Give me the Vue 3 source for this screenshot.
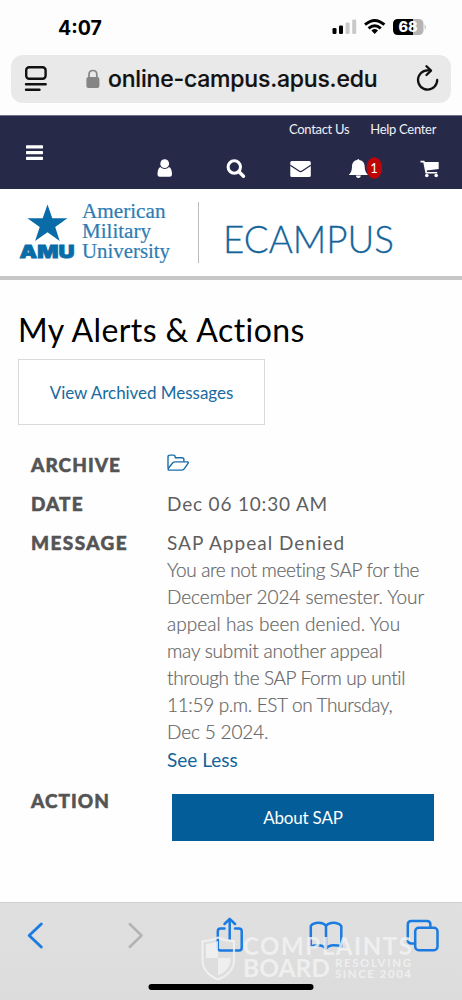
<script setup>
const bodyLines = [
  'You are not meeting SAP for the',
  'December 2024 semester. Your',
  'appeal has been denied. You',
  'may submit another appeal',
  'through the SAP Form up until',
  '11:59 p.m. EST on Thursday,',
  'Dec 5 2024.',
]
</script>

<template>
  <div class="phone">
    <div class="status">
      <span class="time">4:07</span>
      <svg class="status-icons" width="100" height="20" viewBox="0 0 100 20">
        <rect x="5.500" y="11" width="4" height="6" rx="1.300" />
        <rect x="12" y="8.500" width="4" height="8.500" rx="1.300" />
        <rect x="18.600" y="5.500" width="4" height="11.500" rx="1.300" fill="#c9c9c9" />
        <rect x="25.200" y="2.500" width="4" height="14.500" rx="1.300" fill="#c9c9c9" />
        <g fill="none" stroke="#000" stroke-width="2.900">
          <path d="M38 7.700Q47.700-.8 57.400 7.700" />
          <path d="M41.600 11.400Q47.700 5.900 53.800 11.400" />
        </g>
        <path d="M44.400 13.400Q47.700 10.500 51 13.400L47.700 17z" />
        <path d="M71 2H86V18H71Q66 18 66 13V7Q66 2 71 2Z" />
        <path d="M86 2H91.500Q96.500 2 96.500 7V13Q96.500 18 91.500 18H86Z" fill="#b5b5b5" />
        <path d="M97.700 7.300Q100 10 97.700 12.700Z" fill="#b5b5b5" />
        <text x="71.500" y="15.400" class="battery">68</text>
      </svg>
    </div>

    <div class="urlbar">
      <svg class="reader" width="24" height="28" viewBox="0 0 24 28" fill="none" stroke="#111" stroke-width="2.400" stroke-linecap="round">
        <rect x="2.200" y="2.200" width="19.400" height="11.600" rx="3" />
        <path d="M2 19.200H21.700M2 24.800H15.500" />
      </svg>
      <svg class="lock" width="14" height="20" viewBox="0 0 14 20">
        <rect x=".4" y="8" width="13" height="11" rx="2" fill="#858585" />
        <path d="M3 9V5.500Q3 1.500 6.900 1.500T10.800 5.500V9" fill="none" stroke="#858585" stroke-width="1.700" />
      </svg>
      <span class="url">online-campus.apus.edu</span>
      <svg class="reload" width="24" height="28" viewBox="0 0 24 28" fill="none" stroke="#111" stroke-width="2.300" stroke-linecap="round" stroke-linejoin="round">
        <path d="M14.300 5.400H11.500A9.600 9.600 0 1 0 21.200 15" />
        <path d="M10.500 1.200L15 5.600L10.500 10" />
      </svg>
    </div>

    <nav class="nav">
      <svg class="burger" width="18" height="16" viewBox="0 0 18 16" fill="#fff">
        <rect width="17" height="3.200" y=".3" rx=".6" /><rect width="17" height="3.200" y="6" rx=".6" /><rect width="17" height="3.200" y="11.700" rx=".6" />
      </svg>
      <div class="nav-right">
        <div class="nav-links"><span>Contact Us</span><span>Help Center</span></div>
        <svg class="nav-icons" width="290" height="24" viewBox="0 0 290 24" fill="#fff">
          <circle cx="11.700" cy="6.700" r="4.400" />
          <path d="M7.200 9.900Q11.700 14.100 16.200 9.900Q18.900 11.100 19 17.500Q19 19.800 16.700 19.800H6.700Q4.500 19.800 4.500 17.500Q4.600 11.100 7.200 9.900Z" />
          <circle cx="81.300" cy="10" r="6.200" fill="none" stroke="#fff" stroke-width="3" />
          <path d="M86 14.700L90.500 19.200" stroke="#fff" stroke-width="3.400" stroke-linecap="round" />
          <rect x="137.300" y="4" width="20.500" height="16" rx="1.600" />
          <path d="M137.300 8.200L146 14Q147.600 15.100 149.200 14L157.800 8.200" fill="none" stroke="#272948" stroke-width="1.300" />
          <path d="M204.200 3Q205.300.9 206.400 3C210 3.700 211.700 6.300 211.700 9.700C211.700 13.700 213.300 16 215 18H195.800C197.500 16 199 13.700 199 9.700C199 6.300 200.600 3.700 204.200 3Z" />
          <path d="M202.800 18.500H208Q207.500 21 205.400 21T202.800 18.500Z" />
          <ellipse cx="221.300" cy="11" rx="7.800" ry="10.800" fill="#bf0508" />
          <text x="221" y="15.500" class="badge">1</text>
          <path d="M267.500 3.700H271.300L272 5H285.700V12L273.700 13.600L274 14.900H284.200V16.500H272.500L270.300 5.400H267.500Z" />
          <circle cx="273.800" cy="18.500" r="1.800" /><circle cx="283.200" cy="18.500" r="1.800" />
        </svg>
      </div>
    </nav>

    <header class="brand">
      <svg width="462" height="86" viewBox="0 0 462 86">
        <path d="M47.500 14.500L52.300 28.300H67.400L55.200 36.900L59.700 51L47.500 42.300L35.100 51L39.700 36.900L27.400 28.300H42.700Z" fill="#096ca8" />
        <text x="19.500" y="68" class="amu" textLength="55" lengthAdjust="spacingAndGlyphs">AMU</text>
        <g class="univ">
          <text x="82" y="28" textLength="83.500" lengthAdjust="spacingAndGlyphs">American</text>
          <text x="82" y="48" textLength="69" lengthAdjust="spacingAndGlyphs">Military</text>
          <text x="82" y="68" textLength="88" lengthAdjust="spacingAndGlyphs">University</text>
        </g>
        <path d="M198.500 12V73" stroke="#bcbcbc" />
        <text x="223" y="62.500" class="ecampus" textLength="171" lengthAdjust="spacingAndGlyphs">ECAMPUS</text>
      </svg>
    </header>

    <main class="main">
      <h1>My Alerts &amp; Actions</h1>
      <div class="archived"><span>View Archived Messages</span></div>
      <dl class="rows">
        <dt>ARCHIVE</dt>
        <dd>
          <svg class="folder" width="23" height="18" viewBox="0 0 23 18" fill="none" stroke="#186da8" stroke-width="1.400" stroke-linejoin="round">
            <path d="M1 14V3Q1 1.100 3 1.100H6.300Q8.200 1.100 8.200 3V3.700H15Q16.900 3.700 16.900 5.500V7.800" />
            <path d="M1.200 14.500L5.600 9Q6.600 7.900 8 7.900H20.300Q22 7.900 21 9.300L17.400 14.700Q16.400 16.100 15 16.100H2.500Q.6 16.100 1.200 14.500Z" />
          </svg>
        </dd>
        <dt>DATE</dt>
        <dd class="date">Dec 06 10:30 AM</dd>
        <dt class="wide">MESSAGE</dt>
        <dd>
          <div class="subject">SAP Appeal Denied</div>
          <div class="text">
            <div v-for="(line, i) in bodyLines" :key="i" :class="'line' + i">{{ line }}</div>
          </div>
          <div class="less">See Less</div>
        </dd>
        <dt>ACTION</dt>
        <dd><div class="button"><span>About SAP</span></div></dd>
      </dl>
    </main>

    <footer class="toolbar">
      <svg width="462" height="98" viewBox="0 0 462 98" fill="none" stroke-linecap="round" stroke-linejoin="round">
        <path d="M41.300 22L29.200 33.500L41.300 45" stroke="#1b7be0" stroke-width="2.900" />
        <path d="M129.700 22L141.500 33.500L129.700 45" stroke="#b3b3b3" stroke-width="2.500" />
        <g stroke="#1b7be0" stroke-width="2.500">
          <path d="M224.500 26.500H220.500Q217.800 26.500 217.800 29.300V45.700Q217.800 48.500 220.500 48.500H239Q241.700 48.500 241.700 45.700V29.300Q241.700 26.500 239 26.500H235M229.700 37V17.500M224.500 22L229.700 16.800L235 22" />
          <path d="M326 24Q324 20.800 318.500 20.800T310.800 24V44.500Q314 43.200 318.500 43.200T326 46.700Q328.500 43.200 333.500 43.200T341.300 44.500V24Q338.500 20.800 333.500 20.800T326 24V46.700" />
          <rect x="415.200" y="25.800" width="22.300" height="22.400" rx="3.500" />
          <path d="M415 41.500H411.500Q407.800 41.500 407.800 38V22.500Q407.800 18.900 411.500 18.900H427Q430.400 18.900 430.400 22.500V25.500" />
        </g>
        <g class="mark">
          <path d="M218 35.500Q226 39.200 234 39.200V58Q234 71 218 77.500Q202.500 71 202.500 58V39.200Q210 39.200 218 35.500Z" stroke="#f4f4f4" stroke-width="2.200" />
          <path d="M218 39V56H206V42Q212 42 218 39ZM218 56H230.500V59Q230 68 218 73.500Z" fill="#f4f4f4" />
          <text x="243" y="52.800" class="wm big" textLength="169">COMPLAINTS</text>
          <text x="243" y="75.300" class="wm big" textLength="87" lengthAdjust="spacingAndGlyphs">BOARD</text>
          <text x="335" y="65" class="wm small" textLength="76">RESOLVING</text>
          <text x="335" y="75.500" class="wm small" textLength="76">SINCE 2004</text>
        </g>
        <rect x="148.500" y="82" width="165" height="6" rx="3" fill="#000" />
      </svg>
    </footer>
  </div>
</template>

<style>
body { margin: 0; background: #fff; }
</style>

<style scoped>
.phone { width: 462px; height: 1000px; overflow: hidden; display: flex; flex-direction: column; background: #fdfdfe; font-family: Lato, "Open Sans", sans-serif; font-variant-ligatures: none; white-space: nowrap; }
.status { height: 55px; flex: none; box-sizing: border-box; padding: 17px 35px 0 58px; display: flex; justify-content: space-between; }
.time { font: 700 19.500px/22px Inter, sans-serif; color: #000; }
.battery { font: 800 14.500px Inter, sans-serif; fill: #fff; }
.urlbar { height: 48px; flex: none; box-sizing: border-box; margin: 0 11px; border-radius: 12px; background: #e9e9ea; display: flex; align-items: center; padding: 0 11px 0 13px; }
.lock { margin-left: 38px; }
.url { margin-left: 8px; font: 500 23px/30px Inter, sans-serif; letter-spacing: -.2px; -webkit-text-stroke: .2px #111; color: #111; width: 270px; }
.reload { margin-left: auto; }
.nav { height: 74px; flex: none; margin-top: 12px; background: #272948; border-top: 1px solid #70728a; box-sizing: border-box; display: flex; justify-content: space-between; }
.burger { margin: 29px 0 0 26px; }
.nav-right { width: 309px; }
.nav-links { height: 26px; padding-left: 136px; display: flex; gap: 21px; color: #f0f0f5; font-size: 13px; line-height: 26px; letter-spacing: -.3px; }
.nav-icons { display: block; margin-top: 15px; overflow: visible; }
.badge { font: 400 13px Lato, sans-serif; text-anchor: middle; fill: #fff; }
.brand { height: 91px; flex: none; box-sizing: border-box; padding-top: 1px; background: #fff; border-bottom: 4px solid #c7c7c8; }
.brand svg { display: block; }
.amu { font: 900 18px Inter, sans-serif; fill: #096ca8; stroke: #096ca8; stroke-width: .8px; }
.univ { font: 400 20px "Liberation Serif", serif; fill: #2f7cb2; stroke: #2f7cb2; stroke-width: .2px; }
.ecampus { font: 300 38px Lato, sans-serif; fill: #14659b; stroke: #14659b; stroke-width: .3px; }
.main { flex: 1; padding: 32px 0 0 18px; background: #fefefe; }
h1 { margin: 0; font-size: 32px; line-height: 35px; font-weight: 400; color: #000; letter-spacing: .42px; }
.archived { margin-top: 12px; width: 247px; height: 66px; box-sizing: border-box; border: 1px solid #d9d9db; text-align: center; font-size: 17px; line-height: 65px; letter-spacing: -.04px; color: #1a6aa0; background: #fff; }
.rows { margin: 26px 0 0 13px; display: grid; grid-template-columns: 136px 267px; grid-template-rows: 39px 39px 258px 60px; }
dt { font-size: 19px; line-height: 28px; font-weight: 900; color: #545454; letter-spacing: 1.050px; -webkit-text-stroke: .5px #545454; }
.wide { letter-spacing: 1.400px; }
dd { margin: 0; color: #5f5f5f; font-size: 19px; line-height: 27px; }
.folder { display: block; margin-top: 3px; }
.date { letter-spacing: .82px; }
.subject { letter-spacing: 1px; }
.text { font-weight: 300; color: #666; font-size: 19px; line-height: 27px; -webkit-text-stroke: .2px #666; }
.line0 { letter-spacing: -.34px; }
.line1 { letter-spacing: -.06px; }
.line2 { letter-spacing: .04px; }
.line3 { letter-spacing: -.2px; }
.line4 { letter-spacing: -.38px; }
.line5 { letter-spacing: -.36px; }
.line6 { letter-spacing: -.15px; }
.less { color: #14659b; line-height: 30px; }
.button { margin: 7px 0 0 5px; width: 262px; height: 47px; background: #035d98; color: #fff; font-size: 17px; line-height: 48px; letter-spacing: -.2px; text-align: center; }
.toolbar { height: 98px; flex: none; background: linear-gradient(#e0e0e0, #dcdcdd); box-shadow: inset 0 1px #d0d0d0; }
.toolbar svg { display: block; }
.mark { opacity: .8; }
.wm { font-family: Lato, sans-serif; fill: #f4f4f4; }
.big { font-size: 24px; font-weight: 700; }
.small { font-size: 11.500px; font-weight: 700; }
</style>
